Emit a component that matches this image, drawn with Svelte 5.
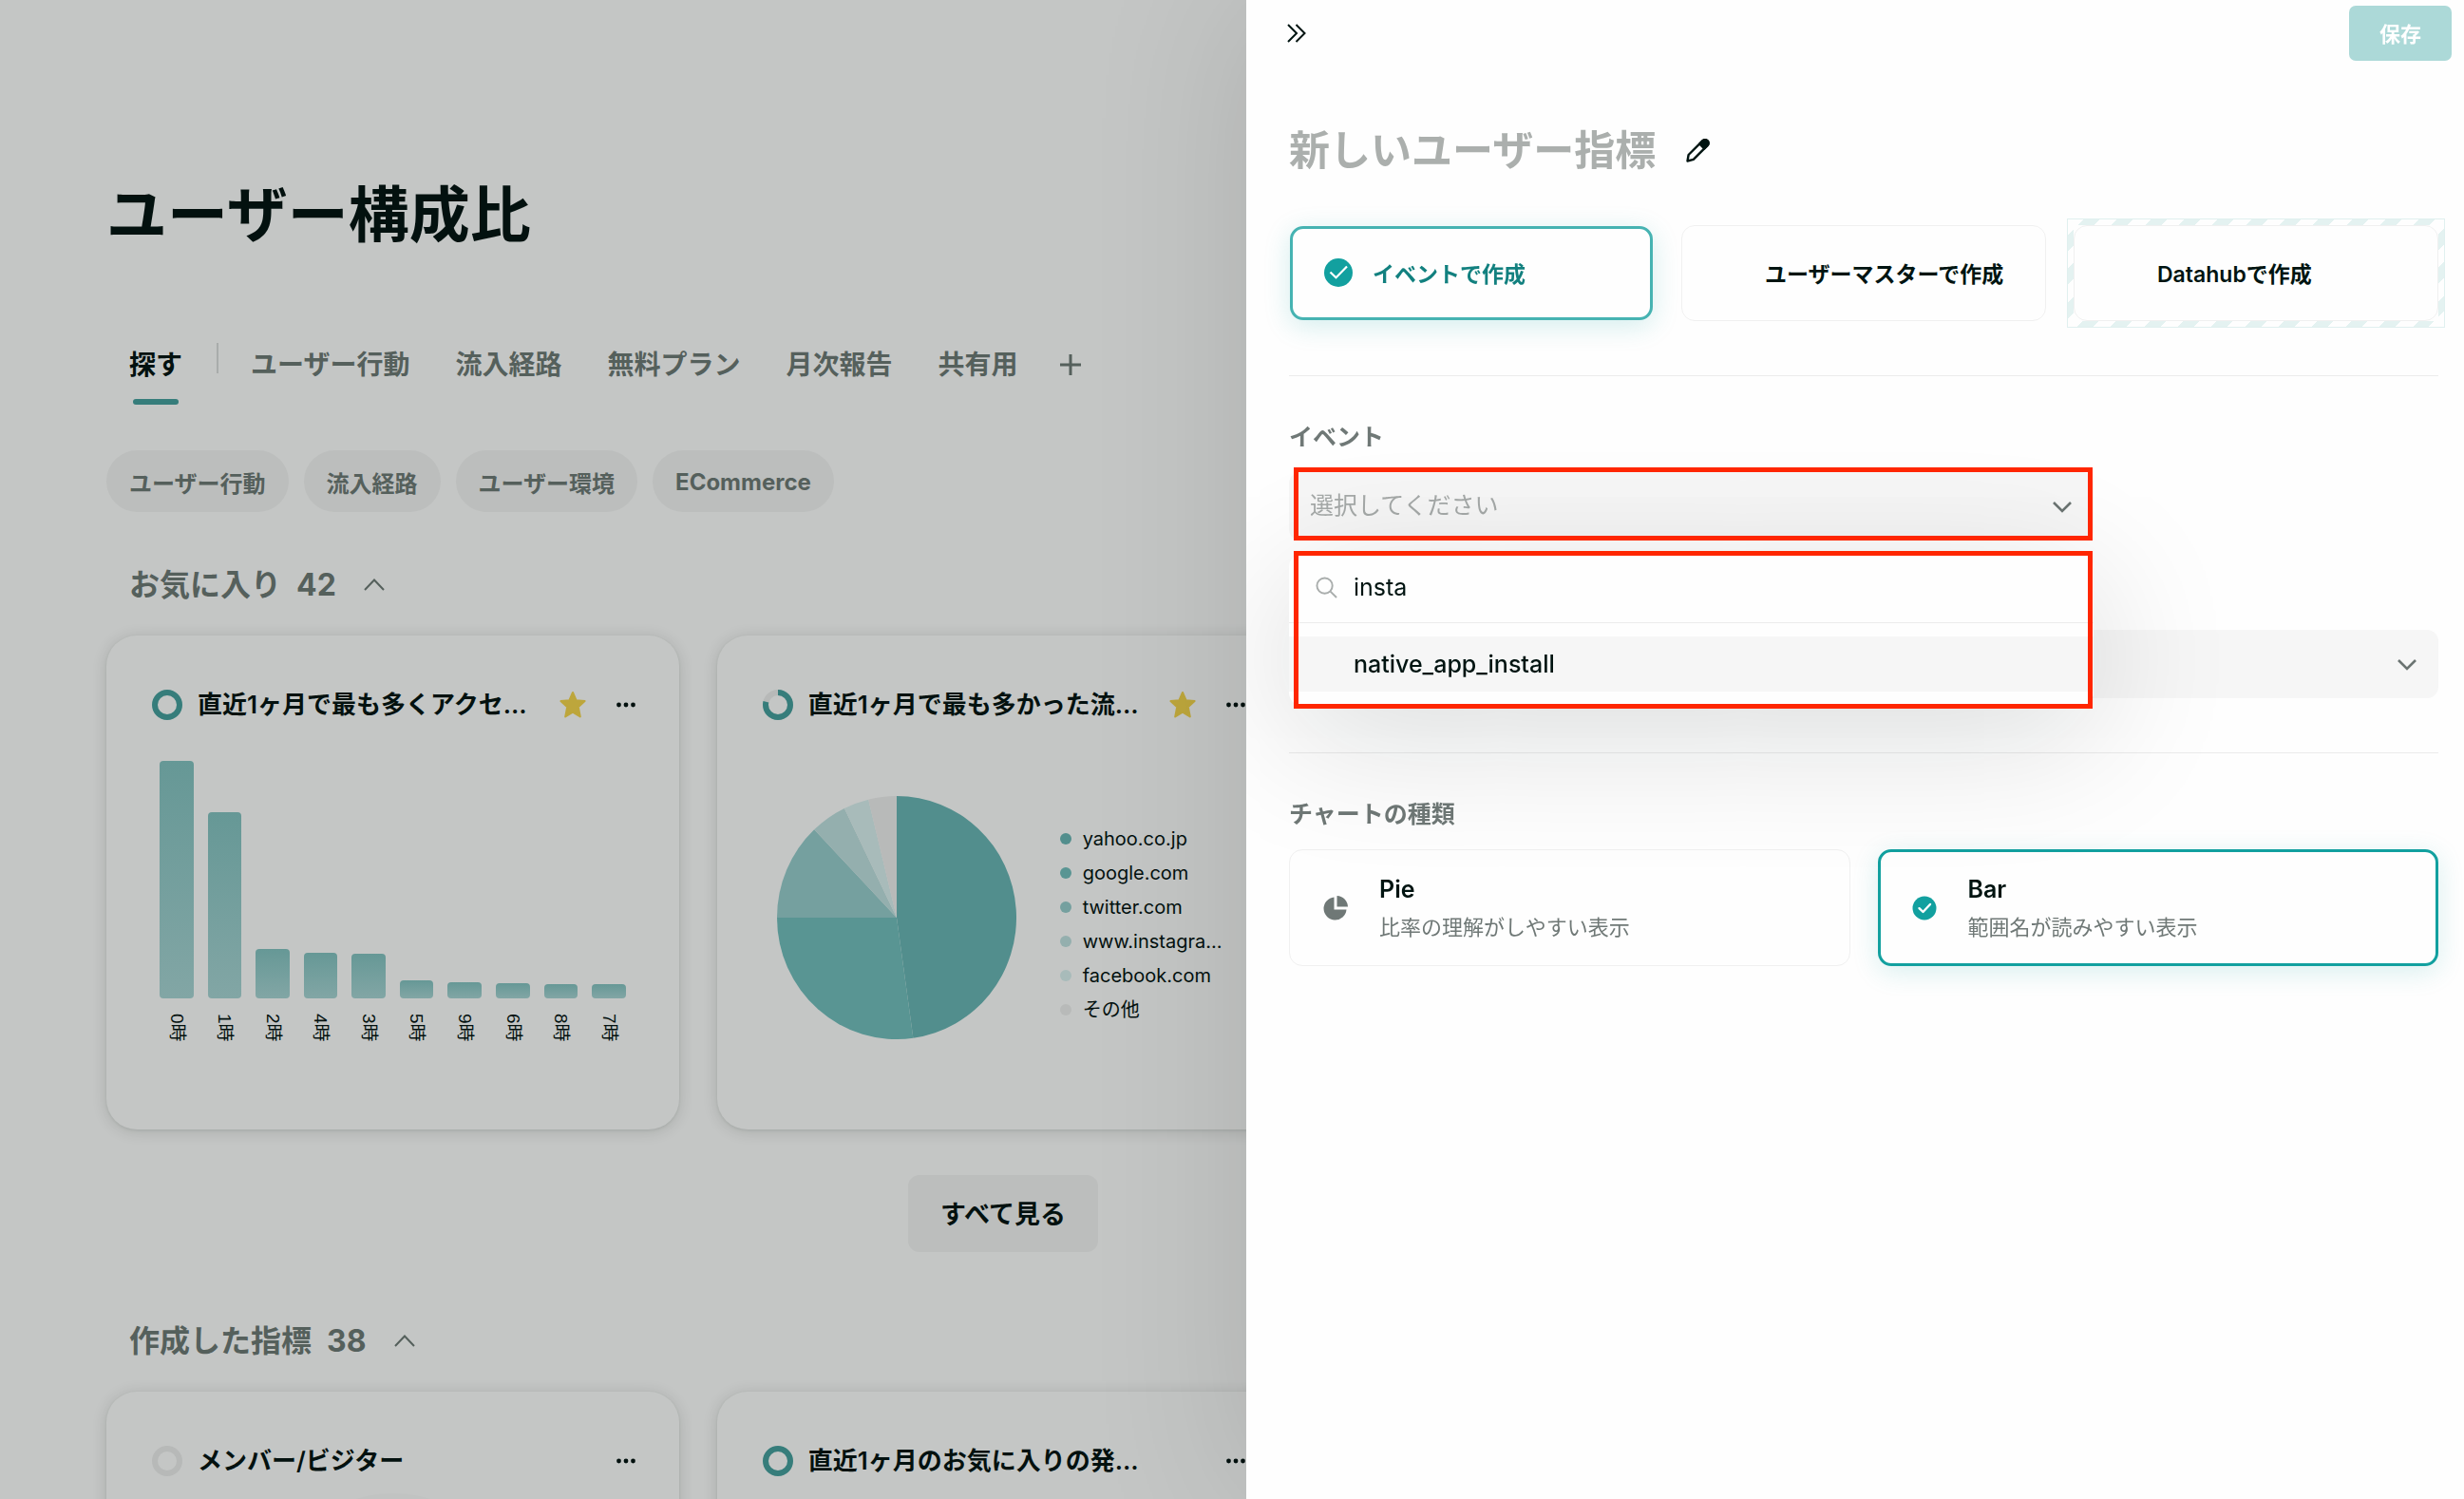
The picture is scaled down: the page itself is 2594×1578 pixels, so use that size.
<script>
  const tabs = ['ユーザー行動', '流入経路', '無料プラン', '月次報告', '共有用'];
  const chips = ['ユーザー行動', '流入経路', 'ユーザー環境', 'ECommerce'];

  const hours = [
    { label: '0時', value: 250 },
    { label: '1時', value: 196 },
    { label: '2時', value: 52 },
    { label: '4時', value: 48 },
    { label: '3時', value: 47 },
    { label: '5時', value: 19 },
    { label: '9時', value: 17 },
    { label: '6時', value: 16 },
    { label: '8時', value: 15 },
    { label: '7時', value: 15 }
  ];

  const sources = [
    { name: 'yahoo.co.jp', share: 47.8, color: '#528e8d' },
    { name: 'google.com', share: 27.2, color: '#599593' },
    { name: 'twitter.com', share: 12.9, color: '#75a09f' },
    { name: 'www.instagra…', share: 4.9, color: '#94afae' },
    { name: 'facebook.com', share: 3.4, color: '#a8bbba' },
    { name: 'その他', share: 3.8, color: '#b8bab9' }
  ];

  const RX = 126;
  const RY = 128;

  function point(share) {
    const a = (share / 100) * Math.PI * 2;
    return `${(RX + RX * Math.sin(a)).toFixed(2)} ${(RY - RY * Math.cos(a)).toFixed(2)}`;
  }

  let start = 0;
  const slices = sources.map((s) => {
    const end = start + s.share;
    const d = `M${RX} ${RY}L${point(start)}A${RX} ${RY} 0 ${s.share > 50 ? 1 : 0} 1 ${point(end)}Z`;
    start = end;
    return { d, color: s.color };
  });

  let source = $state('event');
  let chart = $state('bar');
  let query = $state('insta');
</script>

{#snippet ring(kind)}
  <svg class="ring" viewBox="0 0 32 32" aria-hidden="true">
    <circle cx="16" cy="16" r="13" fill="none" stroke={kind === 'full' ? '#367d7b' : '#b7b9b8'} stroke-width="6" />
    {#if kind === 'part'}
      <circle cx="16" cy="16" r="13" fill="none" stroke="#367d7b" stroke-width="6" pathLength="100" stroke-dasharray="79 21" transform="rotate(-90 16 16)" />
    {/if}
  </svg>
{/snippet}

{#snippet caret()}
  <svg class="caret" viewBox="0 0 22 22" aria-hidden="true">
    <path d="M1 16L11 5.500L21 16" fill="none" stroke="#55605c" stroke-width="2" />
  </svg>
{/snippet}

{#snippet cardHead(kind, title, starred)}
  <header class="card-head">
    {@render ring(kind)}
    <h3>{title}</h3>
    {#if starred}
      <button class="icon" aria-label="お気に入りから外す">
        <svg class="star" viewBox="0 0 28 30" aria-hidden="true">
          <path d="M14 2l3.600 8.200 9 .9-6.800 6.100 2 10.300L14 22.700l-7.800 4.800 2-10.300L1.400 11.100l9-.9z" fill="#bda63c" stroke="#bda63c" stroke-width="2" stroke-linejoin="round" />
        </svg>
      </button>
    {/if}
    <button class="icon" aria-label="メニュー">
      <svg class="dots" viewBox="0 0 20 6" aria-hidden="true">
        <g fill="#03110f"><circle cx="2.500" cy="3" r="2.400" /><circle cx="10" cy="3" r="2.400" /><circle cx="17.500" cy="3" r="2.400" /></g>
      </svg>
    </button>
  </header>
{/snippet}

<main class="page">
  <h1>ユーザー構成比</h1>

  <nav class="tabs">
    <a class="tab current" href="#explore"><span>探す</span></a>
    <i class="rule"></i>
    {#each tabs as t}
      <a class="tab" href="#tab"><span>{t}</span></a>
    {/each}
    <button class="icon add" aria-label="タブを追加">
      <svg viewBox="0 0 22 22" aria-hidden="true"><path d="M11 0V22M0 11H22" stroke="#55605c" stroke-width="3" /></svg>
    </button>
  </nav>

  <div class="chips">
    {#each chips as c}
      <button class="chip">{c}</button>
    {/each}
  </div>

  <h2>お気に入り <span class="count">42</span>{@render caret()}</h2>
  <div class="cards">
    <article class="card">
      {@render cardHead('full', '直近1ヶ月で最も多くアクセ…', true)}
      <div class="bars">
        {#each hours as h}
          <div class="bar" style="height: {h.value}px"></div>
        {/each}
      </div>
      <div class="bar-labels">
        {#each hours as h}
          <span>{h.label}</span>
        {/each}
      </div>
    </article>
    <article class="card">
      {@render cardHead('part', '直近1ヶ月で最も多かった流…', true)}
      <div class="pie-row">
        <svg class="pie" viewBox="0 0 252 256" aria-hidden="true">
          {#each slices as s}
            <path d={s.d} fill={s.color} />
          {/each}
        </svg>
        <ul class="legend">
          {#each sources as s}
            <li><i style="background: {s.color}"></i>{s.name}</li>
          {/each}
        </ul>
      </div>
    </article>
  </div>
  <button class="all">すべて見る</button>

  <h2 class="later">作成した指標 <span class="count">38</span>{@render caret()}</h2>
  <div class="cards">
    <article class="card">
      {@render cardHead('none', 'メンバー/ビジター', false)}
      <div class="empty-pie"></div>
    </article>
    <article class="card">
      {@render cardHead('full', '直近1ヶ月のお気に入りの発…', false)}
    </article>
  </div>
</main>

<aside class="drawer">
  <div class="topbar">
    <button class="icon" aria-label="閉じる">
      <svg class="fold" viewBox="0 0 20 20" aria-hidden="true">
        <path d="M1 1L10 10L1 19M9.500 1L18.500 10L9.500 19" fill="none" stroke="#001411" stroke-width="2" />
      </svg>
    </button>
    <button class="save">保存</button>
  </div>

  <div class="body">
    <div class="title">
      <h2>新しいユーザー指標</h2>
      <button class="icon" aria-label="名前を編集">
        <svg class="pencil" viewBox="0 0 26 26" aria-hidden="true">
          <path d="M1.500 24.500L2.600 18L17.500 3.200a3.400 3.400 0 0 1 5 0a3.400 3.400 0 0 1 0 5L7.800 22.800Z" fill="none" stroke="#001411" stroke-width="2.400" stroke-linejoin="round" />
          <path d="M14.200 6.500l3.300-3.300a3.400 3.400 0 0 1 5 0a3.400 3.400 0 0 1 0 5l-3.300 3.300z" fill="#001411" stroke="#001411" stroke-width="2.400" stroke-linejoin="round" />
        </svg>
      </button>
    </div>

    <div class="sources">
      <label class="option picked">
        <input type="radio" name="source" value="event" bind:group={source} />
        <svg class="tick" viewBox="0 0 30 30" aria-hidden="true">
          <circle cx="15" cy="15" r="15" fill="#12a09f" />
          <path d="M6.500 14.500l6 5.800L24 8.500" fill="none" stroke="#fff" stroke-width="2.200" />
        </svg>
        <span>イベントで作成</span>
      </label>
      <label class="option">
        <input type="radio" name="source" value="master" bind:group={source} />
        <span>ユーザーマスターで作成</span>
      </label>
      <label class="option striped">
        <input type="radio" name="source" value="datahub" bind:group={source} />
        <span>Datahubで作成</span>
      </label>
    </div>

    <hr />

    <label class="caption" for="event">イベント</label>
    <div class="field short marked">
      <select id="event"><option>選択してください</option></select>
      <svg class="down" viewBox="0 0 20 12" aria-hidden="true"><path d="M1 1L10 10L19 1" fill="none" stroke="#6b7472" stroke-width="2.600" /></svg>
      <div class="menu">
        <div class="search">
          <svg viewBox="0 0 24 24" aria-hidden="true">
            <circle cx="10" cy="10" r="8.500" fill="none" stroke="#a9adac" stroke-width="2" />
            <path d="M16 16L23 23" stroke="#a9adac" stroke-width="2" />
          </svg>
          <input type="text" aria-label="イベントを検索" bind:value={query} />
        </div>
        <button class="result">native_app_install</button>
      </div>
    </div>

    <div class="field second">
      <select aria-label="パラメーター"><option></option></select>
      <svg class="down" viewBox="0 0 20 12" aria-hidden="true"><path d="M1 1L10 10L19 1" fill="none" stroke="#6b7472" stroke-width="2.600" /></svg>
    </div>

    <hr />

    <p class="caption">チャートの種類</p>
    <div class="charts">
      <label class="kind">
        <input type="radio" name="chart" value="pie" bind:group={chart} />
        <svg viewBox="0 0 26 26" aria-hidden="true">
          <path d="M11.500 1.500V14.500H24.500A12 12 0 1 1 11.500 1.500Z" fill="#6f7876" />
          <path d="M14.500 0A12 12 0 0 1 26 11.500H14.500Z" fill="#6f7876" />
        </svg>
        <span class="text"><b>Pie</b><small>比率の理解がしやすい表示</small></span>
      </label>
      <label class="kind on">
        <input type="radio" name="chart" value="bar" bind:group={chart} />
        <svg viewBox="0 0 26 26" aria-hidden="true">
          <circle cx="13" cy="13" r="12.500" fill="#12a09f" />
          <path d="M7.500 13.200l4 3.800 7.500-8" fill="none" stroke="#fff" stroke-width="2.400" stroke-linecap="round" stroke-linejoin="round" />
        </svg>
        <span class="text"><b>Bar</b><small>範囲名が読みやすい表示</small></span>
      </label>
    </div>
  </div>
</aside>

<style>
  :global(body) {
    background: #c4c6c5;
    font-family: Inter, 'Noto Sans CJK JP', sans-serif;
    color: #03110f;
  }
  :global(#app) {
    height: 100vh;
    overflow: hidden;
  }
  * {
    box-sizing: border-box;
  }
  h1, h2, h3, p, ul {
    margin: 0;
    padding: 0;
    font-weight: 600;
  }
  button, select, input {
    font: inherit;
    color: inherit;
    border: 0;
    padding: 0;
    margin: 0;
  }
  svg {
    display: block;
    flex: none;
  }
  .icon {
    background: none;
    flex: none;
  }

  /* Dimmed page behind the drawer */
  .page {
    height: 100%;
    overflow: hidden;
    padding: 190px 594px 0 112px;
  }
  h1 {
    font-size: 64px;
    line-height: 72px;
  }
  .tabs {
    display: flex;
    margin-top: 88px;
    padding-left: 24px;
    font-size: 28px;
    font-weight: 600;
    line-height: 68px;
    white-space: nowrap;
  }
  .tab {
    color: #55605c;
    text-decoration: none;
    margin-right: 48px;
    height: 76px;
  }
  .tab.current {
    color: #03110f;
    margin-right: 36px;
  }
  .tab span {
    display: block;
  }
  .tab.current::after {
    content: '';
    display: block;
    height: 6px;
    margin: 2px 4px 0;
    border-radius: 3px;
    background: #367d7b;
  }
  .rule {
    width: 2px;
    height: 32px;
    margin: 11px 34px 0 0;
    background: #a9acab;
  }
  .add {
    height: 68px;
    margin-left: -4px;
  }
  .add svg {
    width: 22px;
  }
  .chips {
    display: flex;
    gap: 16px;
    margin-top: 48px;
  }
  .chip {
    height: 65px;
    padding: 2px 24px 0;
    border-radius: 33px;
    background: #bcbebd;
    color: #55605c;
    font-size: 24px;
    font-weight: 700;
  }
  .page h2 {
    display: flex;
    align-items: center;
    margin-top: 53px;
    padding-left: 24px;
    color: #55605c;
    font-size: 32px;
    line-height: 48px;
    font-weight: 700;
  }
  .page h2.later {
    margin-top: 70px;
  }
  .count {
    margin-left: 16px;
  }
  .caret {
    width: 22px;
    margin-left: 29px;
  }
  .cards {
    display: grid;
    grid-template-columns: repeat(3, 1fr);
    gap: 40px;
    margin-top: 29px;
  }
  .card {
    height: 520px;
    padding: 56px 46px 0 48px;
    border-radius: 32px;
    background: #c4c6c5;
    box-shadow: 0 2px 16px rgba(0, 20, 17, 0.14), 0 1px 3px rgba(0, 20, 17, 0.08);
  }
  .card-head {
    display: flex;
    align-items: center;
    height: 34px;
  }
  .ring {
    width: 32px;
    margin-right: 16px;
  }
  h3 {
    flex: 1;
    font-size: 26px;
    line-height: 34px;
    white-space: nowrap;
  }
  .star {
    width: 28px;
  }
  .dots {
    width: 20px;
    margin-left: 32px;
  }
  .bars {
    display: flex;
    align-items: flex-end;
    gap: 15px;
    height: 250px;
    margin: 42px 10px 0 8px;
  }
  .bar {
    flex: 1;
    border-radius: 4px;
    background: linear-gradient(#669896, #82a6a5);
  }
  .bar-labels {
    display: flex;
    gap: 15px;
    margin: 16px 10px 0 8px;
    font-family: 'Liberation Sans', 'Noto Sans CJK JP', sans-serif;
    font-size: 19px;
  }
  .bar-labels span {
    flex: 1;
    writing-mode: vertical-rl;
    text-orientation: sideways;
    line-height: 35px;
  }
  .pie-row {
    display: flex;
    gap: 46px;
    margin: 79px 0 0 15px;
  }
  .pie {
    width: 252px;
    height: 256px;
  }
  .legend {
    list-style: none;
    margin-top: 27px;
    font-size: 20px;
  }
  .legend li {
    display: flex;
    align-items: center;
    gap: 12px;
    height: 36px;
    line-height: 36px;
    font-weight: 400;
    white-space: nowrap;
  }
  .legend i {
    width: 12px;
    height: 12px;
    border-radius: 50%;
  }
  .all {
    display: block;
    width: 200px;
    height: 81px;
    margin: 48px auto 0;
    padding-bottom: 2px;
    border-radius: 12px;
    background: #bcbebd;
    font-size: 27px;
    font-weight: 600;
  }
  .empty-pie {
    width: 256px;
    height: 256px;
    margin: 17px auto 0;
    border-radius: 50%;
    background: #c1c3c2;
  }

  /* Drawer */
  .drawer {
    position: fixed;
    top: 0;
    right: 0;
    bottom: 0;
    width: calc(50% - 15px);
    overflow: hidden auto;
    background: #fefefe;
    color: #001411;
    box-shadow: 0 0 160px rgba(0, 20, 17, 0.12);
  }
  .topbar {
    display: flex;
    align-items: center;
    justify-content: space-between;
    padding: 6px 13px 0 43px;
  }
  .fold {
    width: 20px;
  }
  .save {
    width: 108px;
    height: 58px;
    padding-bottom: 2px;
    border-radius: 7px;
    background: #acd9d8;
    color: #fff;
    font-size: 22px;
    font-weight: 600;
  }
  .body {
    padding: 66px 27px 0 45px;
  }
  .title {
    display: flex;
    align-items: center;
    gap: 32px;
  }
  .title h2 {
    color: #abafad;
    font-size: 43px;
    line-height: 56px;
  }
  .pencil {
    width: 26px;
  }
  .sources {
    display: grid;
    grid-template-columns: repeat(3, 1fr);
    gap: 29px;
    margin-top: 51px;
  }
  .option {
    position: relative;
    display: flex;
    align-items: center;
    height: 101px;
    padding: 0 0 2px 87px;
    border: 1px solid #f0f0f0;
    border-radius: 14px;
    background: #fefefe;
    font-size: 23px;
    font-weight: 600;
    white-space: nowrap;
  }
  .option input, .kind input {
    position: absolute;
    opacity: 0;
    width: 1px;
    height: 1px;
  }
  .picked {
    height: 99px;
    margin: 1px;
    padding-left: 33px;
    border: 3px solid #46b3b2;
    color: #12807f;
    box-shadow: 0 6px 28px rgba(18, 160, 159, 0.18);
  }
  .tick {
    width: 30px;
    margin-right: 21px;
  }
  .striped::before {
    content: '';
    position: absolute;
    inset: -8px;
    z-index: -1;
    border: 7px solid transparent;
    background:
      linear-gradient(#fefefe, #fefefe) padding-box,
      repeating-linear-gradient(135deg, #fefefe 0 13px, #e4f2f1 13px 25px) border-box;
    outline: 1px solid #e0f0ef;
    outline-offset: -1px;
  }
  hr {
    height: 1px;
    margin: 57px 0 47px;
    border: 0;
    background: #ebebeb;
  }
  .caption {
    display: block;
    margin-bottom: 20px;
    color: #6f7876;
    font-size: 25px;
    font-weight: 600;
    line-height: 34px;
  }
  .field {
    position: relative;
    display: flex;
    align-items: center;
    height: 72px;
    border-radius: 12px;
    background: #f6f6f6;
  }
  .field select {
    appearance: none;
    flex: 1;
    height: 100%;
    padding: 0 22px 2px;
    border-radius: 12px;
    background: transparent;
    color: #a5a9a8;
    font-size: 25px;
  }
  .down {
    width: 20px;
    margin: 2px 23px 0 0;
  }
  .short {
    width: 70%;
    z-index: 1;
  }
  .second {
    margin-top: 94px;
  }
  .marked::after, .menu::after {
    content: '';
    position: absolute;
    inset: -5px 1px 0 5px;
    border: 5px solid #ff2600;
    pointer-events: none;
  }
  .menu::after {
    inset: -3px 1px -3px 5px;
  }
  .menu {
    position: absolute;
    top: 86px;
    left: 0;
    right: 0;
    padding-bottom: 15px;
    border-radius: 14px;
    background: #fefefe;
    box-shadow: 0 30px 150px rgba(0, 20, 17, 0.15);
  }
  .search {
    display: flex;
    align-items: center;
    gap: 17px;
    height: 73px;
    margin-bottom: 14px;
    padding: 0 0 2px 28px;
    border-bottom: 1px solid #ececec;
  }
  .search svg {
    width: 23px;
  }
  .search input {
    flex: 1;
    min-width: 0;
    height: 100%;
    outline: 0;
    background: transparent;
    font-size: 25px;
  }
  .result {
    display: block;
    width: 100%;
    height: 58px;
    padding-left: 68px;
    background: #f6f6f6;
    font-size: 25px;
    font-weight: 500;
    text-align: left;
  }
  .charts {
    display: grid;
    grid-template-columns: 1fr 1fr;
    gap: 29px;
  }
  .kind {
    position: relative;
    display: flex;
    align-items: center;
    gap: 33px;
    height: 123px;
    padding-left: 35px;
    border: 1px solid #f0f0f0;
    border-radius: 14px;
  }
  .kind.on {
    padding-left: 33px;
    border: 3px solid #12a09f;
    box-shadow: 0 6px 28px rgba(18, 160, 159, 0.16);
  }
  .kind svg {
    width: 26px;
  }
  .text {
    display: flex;
    flex-direction: column;
    gap: 6px;
    line-height: 34px;
  }
  .text b {
    font-size: 25px;
    font-weight: 600;
  }
  .text small {
    color: #6f7876;
    font-size: 22px;
  }
</style>
